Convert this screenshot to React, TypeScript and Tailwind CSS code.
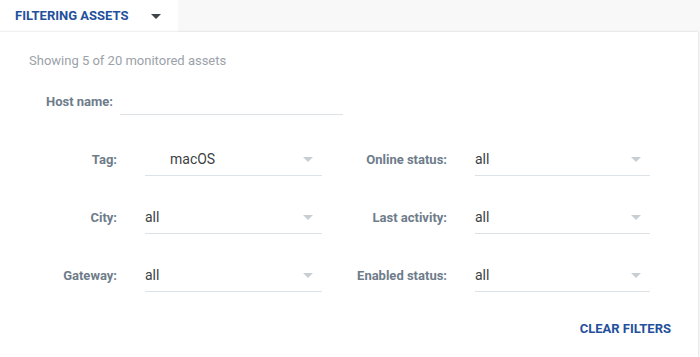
import React from 'react';

const Caret = ({ className }: { className: string }) => (
  <svg width="10" height="5" viewBox="0 0 10 5" className={className}>
    <path d="M0 0 L10 0 L5 5 Z" fill="currentColor" />
  </svg>
);

interface SelectProps {
  value: string;
  indent?: boolean;
  width: string;
}

const Select: React.FC<SelectProps> = ({ value, indent, width }) => (
  <div className={`${width} h-[32px] flex items-center border-b border-[#dde2e6]`}>
    <span className={`flex-1 text-[14px] text-[#3b3f44] ${indent ? 'pl-[25px]' : ''}`}>{value}</span>
    <Caret className="text-[#c9ced3] mr-[9px]" />
  </div>
);

const Field = ({ label, value, labelW, selectW, indent }: { label: string; value: string; labelW: string; selectW: string; indent?: boolean }) => (
  <div className="flex items-center">
    <div className={`${labelW} text-right text-[13px] font-bold text-[#6e7c8a]`}>{label}</div>
    <div className="w-[28px]" />
    <Select value={value} width={selectW} indent={indent} />
  </div>
);

export default function App() {
  const rows = [
    [{ label: 'Tag:', value: 'macOS', indent: true }, { label: 'Online status:', value: 'all' }],
    [{ label: 'City:', value: 'all' }, { label: 'Last activity:', value: 'all' }],
    [{ label: 'Gateway:', value: 'all' }, { label: 'Enabled status:', value: 'all' }],
  ];

  return (
    <div className="w-[700px] h-[357px] bg-[#f8f8f8] overflow-hidden" style={{ fontFamily: 'Roboto, "Liberation Sans", sans-serif' }}>
      <div className="w-[178px] h-[32px] bg-white flex items-center pl-[15px]">
        <span className="text-[13px] font-bold text-[#234f9c]">FILTERING ASSETS</span>
        <Caret className="text-[#40454a] ml-[23px] mt-[1px]" />
      </div>
      <div className="w-[698px] h-[325px] bg-white shadow-[0_0_2px_rgba(0,0,0,0.18)] pt-[21px] pl-[29px] pr-[27px]">
        <div className="text-[13px] leading-[16px] text-[#9ba2a9]">Showing 5 of 20 monitored assets</div>

        <div className="flex items-center mt-[20px]">
          <div className="w-[84px] text-right text-[13px] font-bold text-[#6e7c8a]">Host name:</div>
          <div className="w-[7px]" />
          <div className="w-[223px] h-[26px] border-b border-[#dde2e6]" />
        </div>

        <div className="flex flex-col gap-[26px] mt-[29px]">
          {rows.map((row, i) => (
            <div key={i} className="flex items-center">
              <Field label={row[0].label} value={row[0].value} indent={row[0].indent} labelW="w-[88px]" selectW="w-[177px]" />
              <Field label={row[1].label} value={row[1].value} labelW="w-[125px]" selectW="w-[175px]" />
            </div>
          ))}
        </div>

        <div className="flex justify-end mt-[29px]">
          <span className="text-[13px] leading-[16px] font-bold text-[#234f9c]">CLEAR FILTERS</span>
        </div>
      </div>
    </div>
  );
}
